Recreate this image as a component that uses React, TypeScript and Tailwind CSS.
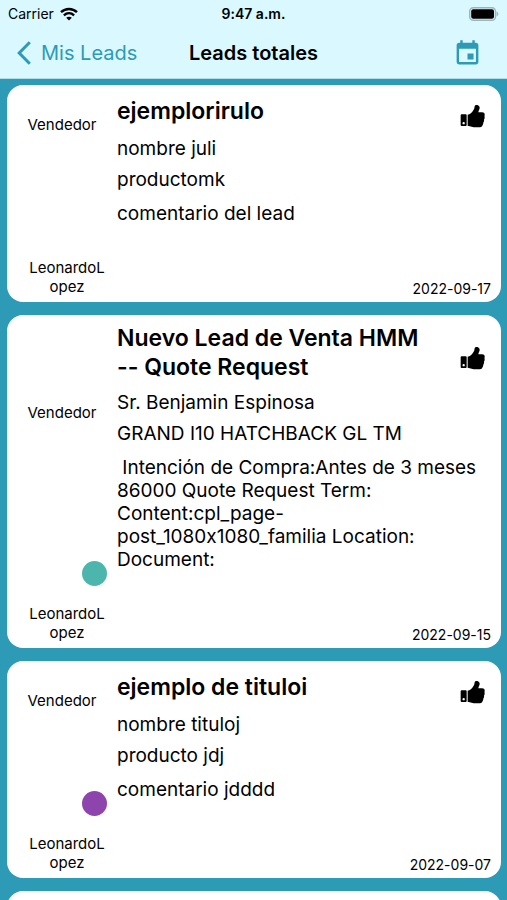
import { MdEvent } from 'react-icons/md';

type Lead = {
  title: string;
  name: string;
  product: string;
  comment: string;
  date: string;
  seller: string;
  dot?: string;
};

const leads: Lead[] = [
  {
    title: 'ejemplorirulo',
    name: 'nombre juli',
    product: 'productomk',
    comment: 'comentario del lead',
    date: '2022-09-17',
    seller: 'LeonardoLopez',
  },
  {
    title: 'Nuevo Lead de Venta HMM -- Quote Request',
    name: 'Sr. Benjamin Espinosa',
    product: 'GRAND I10 HATCHBACK GL TM',
    comment:
      ' Intención de Compra:Antes de 3 meses 86000 Quote Request Term: Content:cpl_page-post_1080x1080_familia Location: Document:',
    date: '2022-09-15',
    seller: 'LeonardoLopez',
    dot: 'bg-[#4db6ac]',
  },
  {
    title: 'ejemplo de tituloi',
    name: 'nombre tituloj',
    product: 'producto jdj',
    comment: 'comentario jdddd',
    date: '2022-09-07',
    seller: 'LeonardoLopez',
    dot: 'bg-[#8e44ad]',
  },
];

function WifiIcon() {
  return (
    <svg viewBox="0 0 18 14" className="h-[14px] w-[18px]" fill="none" stroke="black" strokeWidth="2.4" aria-hidden="true">
      <path d="M1 5.2C5.6 0.9 12.4 0.9 17 5.2" />
      <path d="M3.9 8.3C6.9 5.6 11.1 5.6 14.1 8.3" />
      <path d="M9 13.6 6.2 10.8C7.8 9.4 10.2 9.4 11.8 10.8Z" fill="black" stroke="none" />
    </svg>
  );
}

function BatteryIcon() {
  return (
    <svg viewBox="0 0 30 14" className="h-[14px] w-[30px]" aria-hidden="true">
      <rect x="0.7" y="0.7" width="25.8" height="12.6" rx="3.6" fill="none" stroke="#9db5b8" strokeWidth="1.4" />
      <rect x="2.2" y="2.2" width="22.8" height="9.6" rx="2" fill="black" />
      <path d="M27.6 4.6C29.9 5.4 29.9 8.6 27.6 9.4Z" fill="#9db5b8" />
    </svg>
  );
}

function ThumbIcon() {
  return (
    <svg viewBox="0 0 75 72" className="h-6 w-[25px]" aria-hidden="true">
      <path
        fillRule="evenodd"
        d="M5 31H17Q20 31 20 34V62Q20 66 17 66H5Q2 66 2 63V34Q2 31 5 31ZM11 54A3.5 3.5 0 1 0 11 61A3.5 3.5 0 1 0 11 54Z"
      />
      <path d="M23 32C30 31 34 27 38 22C43 16 43 12 44 7C45 3 50 2 54 4C60 7 60 13 57 18C56 21 55 23 55 25H66C72 25 75 29 74 34C73 36 74 38 74 41C74 44 72 46 72 48C73 51 71 54 70 56C70 59 69 61 68 63C66 69 62 70 55 70H47C38 70 32 66 23 65Z" />
    </svg>
  );
}

function Header() {
  return (
    <header className="border-b border-[#b3dde6] bg-[#d9f8ff]">
      <div className="grid h-7 grid-cols-[1fr_auto_1fr] items-center px-2 text-sm">
        <div className="flex items-center gap-[6px]">
          <span>Carrier</span>
          <WifiIcon />
        </div>
        <span className="font-semibold">9:47 a.m.</span>
        <div className="flex justify-end">
          <BatteryIcon />
        </div>
      </div>
      <div className="grid h-[50px] grid-cols-[1fr_auto_1fr] items-center px-[17px] text-xl leading-6">
        <button type="button" className="flex items-center gap-[10px] text-[#2d9bb5]">
          <svg viewBox="0 0 14 24" className="h-6 w-[14px]" fill="none" stroke="currentColor" strokeWidth="3" aria-hidden="true">
            <path d="M12.8 1.2 2.2 12 12.8 22.8" />
          </svg>
          Mis Leads
        </button>
        <h1 className="font-semibold">Leads totales</h1>
        <button type="button" aria-label="Calendario" className="flex justify-self-end pr-2 text-[#2d9bb5]">
          <MdEvent className="size-[29px]" />
        </button>
      </div>
    </header>
  );
}

function LeadCard({ lead }: { lead: Lead }) {
  return (
    <article className="flex rounded-2xl bg-white">
      <div className="flex w-[110px] shrink-0 flex-col pb-[6px] text-[15px] leading-[19px]">
        <div className="flex flex-1 items-center justify-center">Vendedor</div>
        <div className="flex flex-col items-end gap-[18px] pt-[52px] pr-[10px]">
          <span className={`size-[25px] rounded-full ${lead.dot ?? ''}`} />
          <span className="w-20 text-center break-all">{lead.seller}</span>
        </div>
      </div>
      <div className="flex min-w-0 flex-1 flex-col pt-[9px] pr-[10px] pb-[5px] text-[19px] leading-[23px]">
        <div className="flex min-h-[34px] items-center pr-[6px]">
          <h2 className="flex-1 pr-8 text-[23px] leading-[29px] font-semibold">{lead.title}</h2>
          <button type="button" aria-label="Me gusta" className="pt-[9px]">
            <ThumbIcon />
          </button>
        </div>
        <p className="mt-[9px]">{lead.name}</p>
        <p className="mt-2">{lead.product}</p>
        <p className="mt-[11px] mb-14 whitespace-pre-wrap">{lead.comment}</p>
        <time className="text-right text-sm leading-4">{lead.date}</time>
      </div>
    </article>
  );
}

export default function App() {
  return (
    <div className="h-screen overflow-hidden bg-[#2d9bb5] font-['Inter','Liberation_Sans',sans-serif] text-black [font-feature-settings:'calt'_0]">
      <Header />
      <main className="flex flex-col gap-[13px] pt-[6px] pr-[6px] pl-[7px]">
        {leads.map((lead) => (
          <LeadCard key={lead.date} lead={lead} />
        ))}
        <article className="h-56 rounded-2xl bg-white" />
      </main>
    </div>
  );
}
